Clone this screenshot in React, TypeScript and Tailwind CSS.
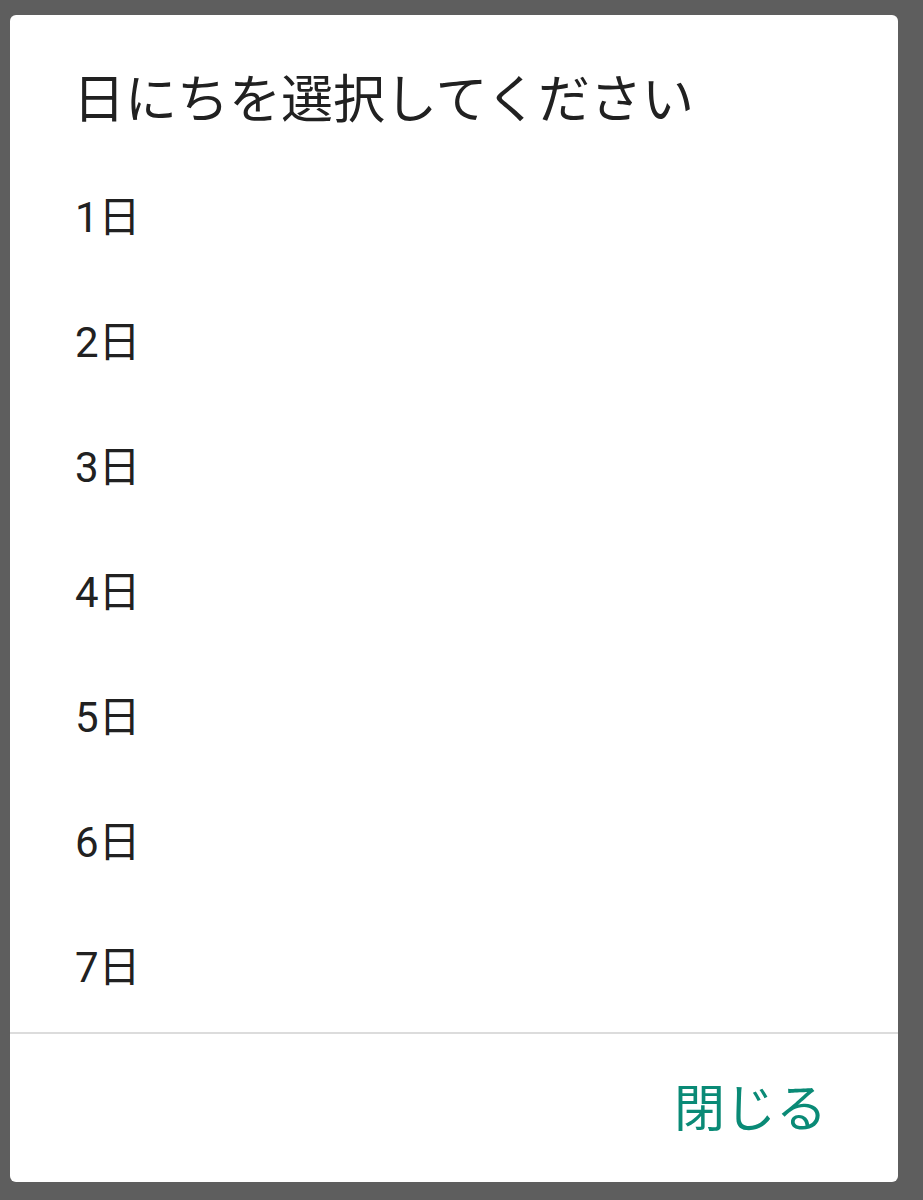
const days = ['1日', '2日', '3日', '4日', '5日', '6日', '7日'];

const font = { fontFamily: 'Roboto, "Noto Sans CJK JP", sans-serif' };

export default function App() {
  return (
    <div
      className="h-[1200px] w-[923px] bg-[#5e5e5e] pt-[15px] pl-[10px]"
      style={font}
    >
      <div className="flex h-[1167px] w-[888px] flex-col overflow-hidden rounded-[6px] bg-white">
        <div className="h-[140px] pl-[63px] pt-[60px] text-[52px] leading-[52px] text-[#212121]">
          日にちを選択してください
        </div>
        <ul className="flex flex-col">
          {days.map((day) => (
            <li
              key={day}
              className="flex h-[125px] items-center pl-[65px] text-[42px] text-[#212121]"
            >
              {day}
            </li>
          ))}
        </ul>
        <div className="mt-[2px] h-[2px] bg-[#dcdcdc]" />
        <div className="flex flex-1 items-center justify-end pr-[71px] pt-[3px]">
          <button
            type="button"
            className="text-[51px] leading-none text-[#0a8a76]"
            style={font}
          >
            閉じる
          </button>
        </div>
      </div>
    </div>
  );
}
